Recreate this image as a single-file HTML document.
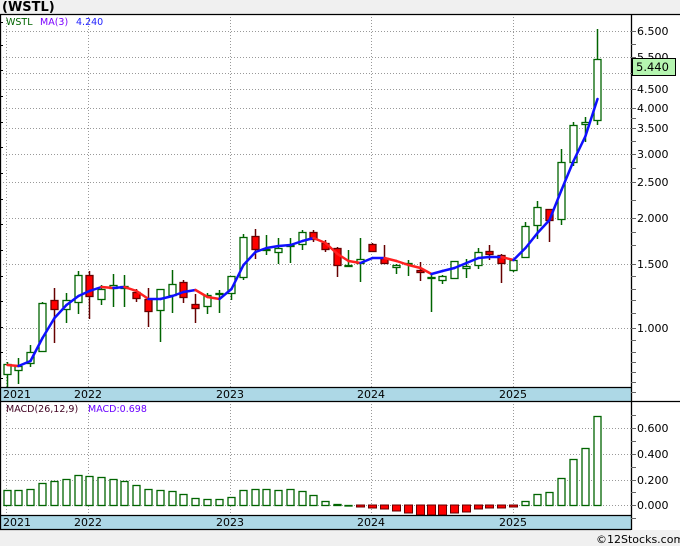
<!DOCTYPE html>
<html><head><meta charset="utf-8"><style>
html,body{margin:0;padding:0;background:#f0f0f0;width:680px;height:546px;overflow:hidden}
svg{display:block;font-family:"DejaVu Sans","Liberation Sans",sans-serif}
</style></head><body>
<svg id="s" width="680" height="546" xmlns="http://www.w3.org/2000/svg">
<rect x="0" y="14" width="680" height="516" fill="#fff"/>
<text x="2" y="11" font-size="13" font-weight="bold" fill="#000">(WSTL)</text>
<g id="grid" stroke="#999" stroke-dasharray="1,2" stroke-width="1"></g>
<rect x="0" y="387" width="631" height="14" fill="#add8e6"/>
<rect x="0" y="515" width="631" height="14" fill="#add8e6"/>
<g id="c"></g>
<g stroke="#000" stroke-width="1.3" fill="none">
<line x1="0" y1="14.5" x2="680" y2="14.5"/>
<line x1="631.5" y1="14" x2="631.5" y2="530"/>
<line x1="0" y1="387.5" x2="631" y2="387.5"/>
<line x1="0" y1="401.5" x2="680" y2="401.5"/>
<line x1="0" y1="515.5" x2="631" y2="515.5"/>
<line x1="0" y1="529.5" x2="631" y2="529.5"/>
<line x1="0.5" y1="14" x2="0.5" y2="530"/>
</g>
<g id="ticks" stroke="#666"></g>
<g font-size="11" fill="#000">
<text x="3" y="398">2021</text><text x="74" y="398">2022</text><text x="216" y="398">2023</text><text x="357" y="398">2024</text><text x="499" y="398">2025</text>
<text x="3" y="526">2021</text><text x="74" y="526">2022</text><text x="216" y="526">2023</text><text x="357" y="526">2024</text><text x="499" y="526">2025</text>
</g>
<g font-size="11" fill="#000">
<text x="637" y="35">6.500</text><text x="637" y="61">5.500</text><text x="637" y="93">4.500</text><text x="637" y="112">4.000</text><text x="637" y="132">3.500</text><text x="637" y="158">3.000</text><text x="637" y="186">2.500</text><text x="637" y="222">2.000</text><text x="637" y="268">1.500</text><text x="637" y="332">1.000</text>
<text x="637" y="432">0.600</text><text x="637" y="458">0.400</text><text x="637" y="484">0.200</text><text x="637" y="509">0.000</text>
</g>
<rect x="632.5" y="58.5" width="43" height="17" fill="#b5f5b0" stroke="#000"/>
<text x="636" y="71" font-size="11.5" fill="#000">5.440</text>
<text x="6" y="25" font-size="9.5" fill="#006400">WSTL</text>
<text x="40" y="25" font-size="9.5" fill="#7a00ff">MA(3)</text>
<text x="76" y="25" font-size="9.5" fill="#2020ff">4.240</text>
<text x="6" y="412" font-size="9.5" fill="#400020">MACD(26,12,9)</text>
<text x="88" y="412" font-size="9.5" fill="#6a00ff">MACD:0.698</text>
<text x="596" y="543" font-size="11" fill="#000">©12Stocks.com</text>
</svg>
<script>
var NS="http://www.w3.org/2000/svg";
function el(p,t,a){var e=document.createElementNS(NS,t);for(var k in a)e.setAttribute(k,a[k]);p.appendChild(e);return e}
var g=document.getElementById('grid'),c=document.getElementById('c'),tk=document.getElementById('ticks');
[31,57,73,89,108,128,154,182,218,264,328,428,454,480,505].forEach(function(y){el(g,'line',{x1:0,x2:631,y1:y+.5,y2:y+.5})});
[6,88,230,371,513].forEach(function(x){el(g,'line',{x1:x+.5,x2:x+.5,y1:14,y2:387});el(g,'line',{x1:x+.5,x2:x+.5,y1:401,y2:515})});
[31,44,57,73,89,108,118,128,141,154,168,182,200,218,232,245,264,276,289,300,313,328,340,352,362,372,382,392,415,428,441,454,467,480,492,505,518].forEach(function(y){el(tk,'line',{x1:631,x2:636,y1:y+.5,y2:y+.5})});
[22,45,70,96,122,147,173,199,224,250,276,301,327,352,378].forEach(function(y){el(tk,'line',{x1:0,x2:3,y1:y+.5,y2:y+.5,stroke:'#000'})});
var C=[[7,364,374,362,387,0],[18,366,370,358,384,0],[30,352,363,345,367,0],[42,303,351,302,351,0],[54,300,309,288,343,1],[66,300,309,293,323,0],[78,275,302,271,314,0],[89,275,296,271,319,1],[101,289,299,285,305,0],[113,285,288,274,307,0],[124,286,288,275,307,0],[136,292,298,289,302,1],[148,299,311,288,327,1],[160,289,310,289,342,0],[172,284,295,270,313,0],[183,282,297,280,303,1],[195,304,308,294,323,1],[207,295,306,293,314,0],[219,293,294,290,313,0],[231,276,293,276,300,0],[243,237,277,234,280,0],[255,236,249,229,259,1],[266,249,250,235,255,0],[278,248,252,238,264,0],[290,245,246,238,263,0],[302,232,244,230,250,0],[313,232,239,230,242,1],[325,243,249,240,252,1],[337,248,265,247,277,1],[348,265,266,250,266,0],[360,259,263,238,282,0],[372,244,251,243,251,1],[384,258,263,245,264,1],[396,265,267,264,274,0],[408,263,264,260,276,0],[420,270,272,262,281,1],[431,277,278,274,312,0],[442,276,280,275,284,0],[454,261,278,261,279,0],[466,266,268,259,278,0],[478,252,265,248,269,0],[489,251,254,245,260,1],[501,255,263,254,283,1],[513,260,270,260,272,0],[525,226,257,222,258,0],[537,207,225,201,239,0],[549,209,220,209,242,1],[561,162,219,149,225,0],[573,125,162,122,166,0],[585,122,124,117,142,0],[597,59,120,29,125,0]];
C.forEach(function(d){var x=d[0],col=d[5]?'#660000':'#006400';
el(c,'line',{x1:x+.5,x2:x+.5,y1:d[3],y2:d[4],stroke:col,'stroke-width':1.5});
var h=Math.max(d[2]-d[1],1);
el(c,'rect',{x:x-3,y:d[1]+.5,width:7,height:h,fill:d[5]?'#ff0000':'#fff',stroke:d[5]?'#660000':'#006400','stroke-width':1.3});});
var M=[365,366,361,338,318,305,296,291,287,288,287,291,299,299,296,292,290,297,299,289,265,252,248,246,245,241,238,243,254,261,263,258,258,261,265,268,274,271,268,263,258,257,257,260,248,233,220,190,161,136,99];
for(var i=1;i<M.length;i++){var x0=C[i-1][0],x1=C[i][0];el(c,'line',{x1:x0+.5,y1:M[i-1],x2:x1+.5,y2:M[i],stroke:M[i]>M[i-1]?'#ff2020':'#1010ff','stroke-width':2.5,'stroke-linecap':'round'})}
var D=[490,490,489,483,481,479,475,476,477,479,481,485,489,490,491,494,498,499,499,497,490,489,489,490,489,491,495,501,504,505,-507,-508,-509,-511,-513,-515,-515,-515,-513,-512,-509,-508,-508,-507,501,494,492,478,459,448,416];
D.forEach(function(v,i){var x=C[i][0];if(v<0){v=-v;el(c,'rect',{x:x-3.5,y:505,width:8,height:Math.max(v-505,1),fill:'#ff0000',stroke:'#660000','stroke-width':1})}else{el(c,'rect',{x:x-3,y:v+.5,width:7,height:Math.max(505-v,0.5),fill:'#fff',stroke:'#006400','stroke-width':1.3})}});
</script>
</body></html>
